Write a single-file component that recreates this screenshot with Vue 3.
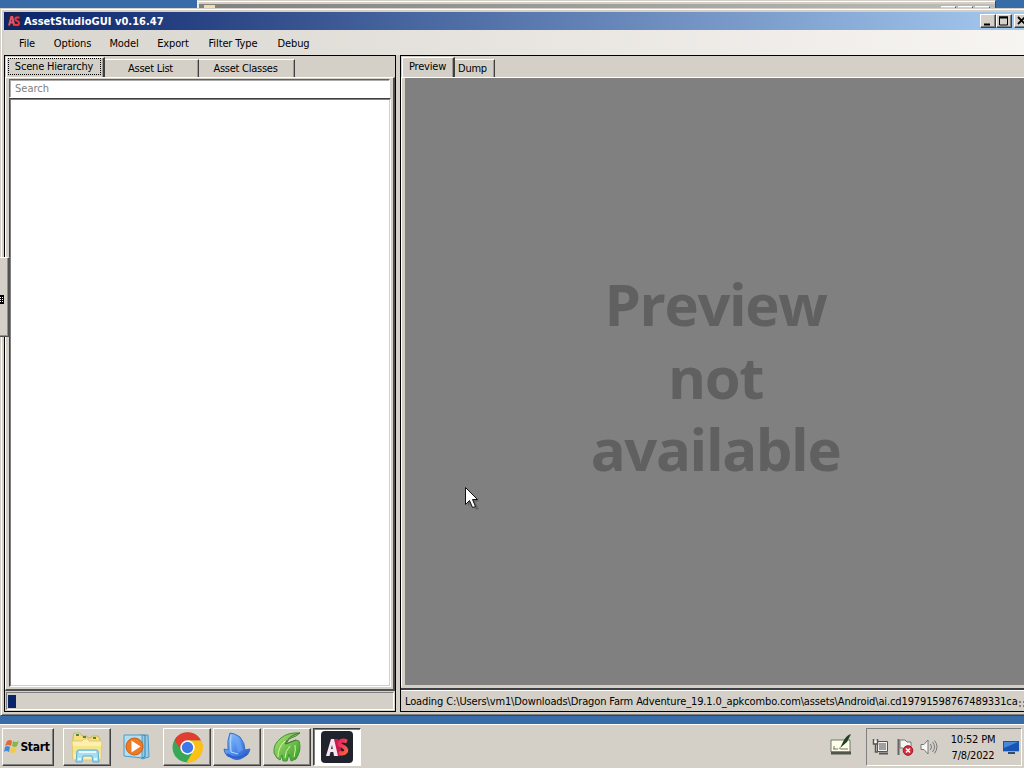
<script setup>
import { ref } from 'vue'

const menus = [
  { label: 'File', width: 36 },
  { label: 'Options', width: 55 },
  { label: 'Model', width: 48 },
  { label: 'Export', width: 50 },
  { label: 'Filter Type', width: 70 },
  { label: 'Debug', width: 51 }
]
const leftTabs = ['Scene Hierarchy', 'Asset List', 'Asset Classes']
const rightTabs = ['Preview', 'Dump']
const leftTab = ref(0)
const rightTab = ref(0)
const search = ref('')
</script>

<template>
  <div class="desktop">
    <!-- window behind -->
    <div class="back-window">
      <i class="folder"></i>
      <div class="back-buttons"><i></i><i></i><i></i></div>
    </div>

    <div class="window">
      <div class="titlebar">
        <svg class="logo" width="14" height="14" viewBox="0 0 14 14">
          <rect width="14" height="14" fill="#202445" />
          <path d="M2 11.500 4.300 3h1l1.900 8.500M3 8.500h3" stroke="#e0566c" stroke-width="2" fill="none" />
          <path d="M12.500 3.500H9.500q-2 1-.5 2.800l2.500 1.400q1.500 2.300-.8 3.300H7.500" stroke="#ed3348" stroke-width="2" fill="none" />
        </svg>
        <span class="title">AssetStudioGUI v0.16.47</span>
        <div class="window-buttons">
          <button><svg width="14" height="12"><path d="M3 9.5h6" stroke="#000" stroke-width="2" /></svg></button>
          <button><svg width="14" height="12"><path d="M2.5 2v8h8V2M2 2h9" fill="none" stroke="#000" /><path d="M2 2.5h9" stroke="#000" stroke-width="2" /></svg></button>
          <button class="close"><svg width="14" height="12"><path d="m3 2 7 7m0-7L3 9" stroke="#000" stroke-width="1.8" /></svg></button>
        </div>
      </div>

      <div class="menubar">
        <span v-for="m in menus" :key="m.label" :style="{ width: m.width + 'px' }">{{ m.label }}</span>
      </div>

      <div class="panels">
        <section class="panel left">
          <div class="tabs">
            <button
              v-for="(t, i) in leftTabs"
              :key="t"
              :class="{ active: leftTab === i }"
              @click="leftTab = i"
            ><span>{{ t }}</span></button>
          </div>
          <div class="tab-page">
            <input v-model="search" placeholder="Search">
            <div class="tree"></div>
          </div>
          <div class="progress"><i></i></div>
        </section>

        <section class="panel right">
          <div class="tabs">
            <button
              v-for="(t, i) in rightTabs"
              :key="t"
              :class="{ active: rightTab === i }"
              @click="rightTab = i"
            ><span>{{ t }}</span></button>
          </div>
          <div class="preview">
            <p>Preview</p>
            <p>not</p>
            <p>available</p>
          </div>
          <div class="status">
            <span>Loading C:\Users\vm1\Downloads\Dragon Farm Adventure_19.1.0_apkcombo.com\assets\Android\ai.cd19791598767489331ca</span>
            <i class="grip"></i>
          </div>
        </section>
      </div>
    </div>

    <div class="input-panel">
      <svg width="5" height="10"><path d="M0 0h4v9H0z" /><path d="M0 2.5h4M0 4.5h4M0 6.5h4" stroke="#fff" stroke-dasharray="1 1" /></svg>
    </div>

    <footer class="taskbar">
      <button class="start">
        <svg width="16" height="16" viewBox="0 0 16 16">
          <path d="M3 2q3-2 5 0L7 7Q4 5 1 7z" fill="#e6653c" />
          <path d="M9 2q3 2 6 0l-2 5q-2 2-5 0z" fill="#83b84b" />
          <path d="M1 8q3-2 5 0l-1 5q-3-2-5 0z" fill="#4389d5" />
          <path d="M7 8q3 2 6 0l-2 5q-2 2-5 0z" fill="#f4c943" />
        </svg>
        <span>Start</span>
      </button>
      <button class="task">
        <svg width="34" height="32" viewBox="0 0 34 32">
          <path d="M3 6 4 2h6l2 3h5l1 2h3l1-2h6l2 3v20H3z" fill="#f5df81" stroke="#cdb45e" />
          <path d="M2 10h10l2-2h4l1 2h13l-1 19H3z" fill="#ffefae" stroke="#dfc973" />
          <path d="M3 15h28v8H3z" fill="#f7e58e" />
          <path d="M6 4h3M13 6h3M23 7h3" stroke="#4b8a48" stroke-width="2" />
          <path d="M6 31 7 20q0-1 2-1h17q2 0 2 1l1 11h-6l-1-6H13l-1 6z" fill="#a6def5" stroke="#58acd4" />
          <path d="M9 21h17M8 28h3m13 0h3" stroke="#e4faff" stroke-width="2" />
        </svg>
      </button>
      <div class="task flat">
        <svg width="28" height="28" viewBox="0 0 28 28">
          <path d="m7 3 18-1 1 22-7 2z" fill="#9fcbe0" stroke="#4b9bc8" />
          <path d="m5 3 17-1v22l-4 1z" fill="#8ecbe8" stroke="#2f85bd" />
          <path d="M1 2h18v23l-18-2z" fill="#b2dff2" stroke="#4d9cc8" />
          <circle cx="11.500" cy="13.500" r="8.500" fill="#ed7b25" stroke="#ca5c16" />
          <path d="m8.500 7.500 9 6-9 6z" fill="#fff" />
        </svg>
      </div>
      <button class="task">
        <svg width="31" height="31" viewBox="0 0 30 30">
          <circle cx="15" cy="15" r="14.5" fill="#3aa757" />
          <path d="M15 15V8h13A14.5 14.5 0 0 1 14 29.5L21 18z" fill="#fbc116" />
          <path d="M2.4 7.8A14.5 14.5 0 0 1 28 8H15L9 18z" fill="#e23d31" />
          <circle cx="15" cy="15" r="7" fill="#fff" />
          <circle cx="15" cy="15" r="5.5" fill="#3f78e8" />
        </svg>
      </button>
      <button class="task">
        <svg width="30" height="30" viewBox="0 0 30 30">
          <defs><linearGradient id="fin" x2="1" y2="1"><stop stop-color="#9fd0ff" /><stop offset=".5" stop-color="#5190ef" /><stop offset="1" stop-color="#2450bf" /></linearGradient></defs>
          <path d="M6 18Q5 8 8 1q4 0 10 4 5 6 5 13l5-1q-1 6-6 8-7 5-14 0-5-1-6-8z" fill="url(#fin)" stroke="#3d6bc1" />
          <path d="M9 3q-1 7 0 17l7 2" stroke="#b2dcff" fill="none" />
          <path d="m12 3 4 18 5-3-4-12z" fill="#77adf6" opacity=".5" />
          <path d="M5 22q9 7 20 0" stroke="#2c61cf" stroke-width="2" fill="none" />
        </svg>
      </button>
      <button class="task">
        <svg width="30" height="32" viewBox="0 0 30 32">
          <defs><linearGradient id="leaf" x2="1" y2="1"><stop stop-color="#b4e77b" /><stop offset="1" stop-color="#329b21" /></linearGradient></defs>
          <path d="M28 2Q16 1 9 7 1 13 2 22l3 5 3 2 2-5 1 6h4l2-7 2 7 5-2q6-9 3-18l-3-1-10 4 3-5 7-3z" fill="url(#leaf)" stroke="#429334" />
          <path d="M6 26Q6 16 13 10M13 27q0-7 5-12m4 11q2-8 1-12" fill="none" stroke="#d5f5ac" />
          <path d="M28 2Q17 4 13 13l11-4" fill="none" stroke="#536b45" />
        </svg>
      </button>
      <button class="task pressed">
        <svg width="32" height="32" viewBox="0 0 32 32">
          <defs><linearGradient id="ess" x2="1" y2="1"><stop stop-color="#e52462" /><stop offset="1" stop-color="#ff653e" /></linearGradient></defs>
          <rect width="32" height="32" rx="4" fill="#20222c" />
          <path d="m11 8 6 0 5 17h-5z" fill="#c71a4a" />
          <path d="M26 10.500q-5-2-7 0-2 3 2 4.500 5 2 4 5.500-2 3-7 1" fill="none" stroke="url(#ess)" stroke-width="4" />
          <path d="m5 25 5-17h3l4 17h-4l-.7-4H9.500l-1 4zm5-7h1.800l-.8-4z" fill="#f3e6ee" />
        </svg>
      </button>

      <div class="spacer"></div>
      <svg class="tablet" width="22" height="22" viewBox="0 0 22 22">
        <path d="M1 6h19v12H1z" fill="#fffde8" stroke="#6f786b" />
        <path d="M1 19h20" stroke="#4f574b" stroke-width="3" />
        <path d="M3 15h5m1-1 2 1h7M4 12v3" stroke="#69796b" fill="none" />
        <path d="M21 0q-4 1-7 6l-4 8 7-6q2-4 4-8z" fill="#213e29" />
      </svg>
      <div class="tray">
        <svg width="18" height="18" viewBox="0 0 18 18">
          <path d="M5.5 3.5h10v10h-10z" fill="#eee" stroke="#555" />
          <path d="M7 5h7v7H7z" fill="#a0a19e" />
          <path d="M7 15.500h9" stroke="#555" stroke-width="2" />
          <path d="M1.500 1v5h4V1M3.500 6v8H6" fill="none" stroke="#555" stroke-width="1.5" />
          <path d="M2.500 2.500h2V5h-2z" fill="#fff" />
        </svg>
        <svg width="18" height="18" viewBox="0 0 18 18">
          <path d="M2.500 1v16" stroke="#666" stroke-width="2" />
          <path d="M4 2h5l2 2h4v8H9l-2-2H4z" fill="#f5f5f1" stroke="#777" />
          <circle cx="12" cy="12.500" r="4.800" fill="#d42c38" stroke="#a51825" />
          <path d="m10 10.500 4 4m0-4-4 4" stroke="#fff" stroke-width="1.700" />
        </svg>
        <svg width="18" height="18" viewBox="0 0 18 18">
          <path d="M1 6.500h3l4-4.500v14l-4-4.500H1z" fill="#f7f7f4" stroke="#777" />
          <path d="M10.500 6q2 3 0 6M12.500 4q4 5 0 10M14.500 2.500q5 6 0 13" fill="none" stroke="#777" />
        </svg>
        <div class="clock"><span>10:52 PM</span><span>7/8/2022</span></div>
        <svg class="monitor" width="16" height="14" viewBox="0 0 16 14">
          <path d="M0 1h16v10H0z" fill="#1754b4" /><path d="M1 2h14L1 8z" fill="#4589dc" />
          <path d="M0 11.500h16" stroke="#8cabc4" /><path d="M5 13h7" stroke="#304d69" stroke-width="2" />
        </svg>
      </div>
    </footer>

    <svg class="cursor" width="18" height="26" viewBox="0 0 18 26">
      <path d="m3 3 11 11-4 1 4 7-3 1-4-7-4 3z" fill="#333" opacity=".35" />
      <path d="M.5.5v17l4-4 3 7 3-1-3-7h5z" fill="#fff" stroke="#111" />
    </svg>
  </div>
</template>

<style>
body {
  margin: 0;
  overflow: hidden;
}
</style>

<style scoped>
* {
  box-sizing: border-box;
}

.desktop {
  position: relative;
  display: flex;
  flex-direction: column;
  width: 1024px;
  height: 768px;
  overflow: hidden;
  background: #386ca8;
  color: #000;
  font: 11px/14px "DejaVu Sans Condensed", "DejaVu Sans", sans-serif;
  font-stretch: condensed;
}

svg {
  display: block;
  flex-shrink: 0;
}

button {
  padding: 0;
  border: 0;
  border-radius: 0;
  background: #d4d0c8;
  color: inherit;
  font: inherit;
}

.back-window {
  display: flex;
  justify-content: space-between;
  width: 799px;
  height: 8px;
  margin-left: 197px;
  padding: 3px 5px 0;
  border-top: 1px solid #d4d0c8;
  border-left: 2px solid #eeece5;
  border-right: 1px solid #454545;
  background: linear-gradient(#fff 1px, #d4d0c8 1px 3px, transparent 3px), linear-gradient(90deg, #808080, #bebdb7);
}

.folder {
  width: 11px;
  height: 4px;
  margin-top: 1px;
  background: #efdfa7;
}

.back-buttons {
  display: flex;
  gap: 2px;
}

.back-buttons i {
  width: 15px;
  height: 3px;
  margin-top: 2px;
  border-top: 1px solid #fff;
  border-right: 1px solid #555;
  background: #d4d0c8;
}

/* main window, wider than the screen */
.window {
  display: flex;
  flex-direction: column;
  width: 1032px;
  height: 708px;
  padding: 2px 0 0 2px;
  border-top: 1px solid #d4d0c8;
  border-left: 1px solid #d4d0c8;
  border-bottom: 1px solid #404040;
  background: #d4d0c8;
  box-shadow: inset 1px 1px #fff, inset 0 -1px #808080;
}

.titlebar {
  display: flex;
  align-items: center;
  width: 1028px;
  height: 18px;
  margin: 1px 0 0 1px;
  padding-left: 3px;
  background: linear-gradient(90deg, #0a246a, #a6caf0);
}

.title {
  width: 142px;
  margin-left: 3px;
  padding-top: 1px;
  color: #fff;
  font-weight: bold;
  letter-spacing: 0.04px;
  white-space: nowrap;
}

.window-buttons {
  display: flex;
  margin-left: auto;
}

.window-buttons button {
  width: 16px;
  height: 14px;
  border: 1px solid;
  border-color: #fff #404040 #404040 #fff;
  box-shadow: inset -1px -1px #808080;
  overflow: hidden;
}

.window-buttons .close {
  margin: 0 2px;
}

.menubar {
  display: flex;
  align-items: center;
  height: 25px;
  margin-left: 1px;
  padding: 3px 0 0 5px;
  background: linear-gradient(90deg, #d8d5ce, #f7f5f2);
}

.menubar span {
  text-align: center;
  letter-spacing: -0.12px;
  white-space: nowrap;
}

.panels {
  display: flex;
  gap: 4px;
  height: 657px;
  margin-left: 1px;
}

.panel {
  display: flex;
  flex-direction: column;
  border: 1px solid #000;
}

.left {
  width: 392px;
}

.right {
  width: 632px;
}

.tabs {
  display: flex;
  align-items: flex-end;
  height: 21px;
  padding-left: 1px;
  flex-shrink: 0;
}

.tabs button {
  height: 18px;
  border-top: 1px solid #fff;
  border-right: 1px solid #404040;
  box-shadow: inset -1px 0 #a09d97;
  letter-spacing: -0.25px;
  white-space: nowrap;
}

.tabs .active {
  height: 20px;
  padding: 0 2px 2px;
  border-left: 1px solid #fff;
  border-right-width: 2px;
}

.left .tabs button {
  width: 95px;
  padding-right: 2px;
}

.left .tabs .active {
  width: 99px;
  padding: 0 2px 2px 1px;
  letter-spacing: -0.18px;
}

.left .tabs button:nth-child(2) {
  width: 94px;
}

.left .tabs button:nth-child(3) {
  width: 96px;
}

.left .active span {
  display: block;
  height: 17px;
  padding-right: 1px;
  border: 1px dotted #000;
  line-height: 15px;
}

.right .tabs .active {
  width: 53px;
  padding: 0 3px 2px 2px;
  letter-spacing: -0.2px;
}

.right .tabs button {
  width: 40px;
  padding-right: 4px;
}

.tab-page {
  display: flex;
  flex-direction: column;
  height: 614px;
  padding: 1px 3px 2px;
  border-top: 1px solid #fff;
  border-left: 1px solid #fff;
  border-right: 2px solid #505050;
  border-bottom: 2px solid #505050;
}

input {
  width: 381px;
  height: 19px;
  padding: 0 5px;
  border: 1px solid;
  border-color: #606060 #fff #fff #606060;
  border-radius: 0;
  outline: 0;
  box-shadow: inset 1px 1px #aaa;
  background: #fff;
  font: inherit;
}

input::placeholder {
  color: #808080;
}

.tree {
  flex: 1;
  width: 382px;
  border: 1px solid;
  border-color: #404040 #fff #fff #404040;
  box-shadow: inset 1px 1px #808080, inset -1px -1px #d4d0c8;
  background: #fff;
}

.progress {
  height: 18px;
  margin: 1px 1px 0;
  padding: 2px 1px;
  border: 1px solid;
  border-color: #808080 #fff #fff #808080;
}

.progress i {
  display: block;
  width: 8px;
  height: 13px;
  background: #0a246a;
}

.preview {
  display: flex;
  flex-direction: column;
  align-items: center;
  height: 611px;
  padding: 190px 2px 0 0;
  border-top: 1px solid #fff;
  border-left: 1px solid #fff;
  border-bottom: 3px solid #d4d0c8;
  background: #808080;
  box-shadow: inset 3px 0 #d4d0c8;
  color: #606060;
  font: bold 58px/72.5px "Open Sans", sans-serif;
  letter-spacing: -1.4px;
}

.preview p {
  margin: 0;
}

.status {
  display: flex;
  align-items: center;
  height: 23px;
  padding: 2px 0 0 4px;
  border-top: 2px solid #404040;
  box-shadow: inset 0 1px #fff;
  white-space: nowrap;
}

.status span {
  width: 614px;
  letter-spacing: -0.125px;
}

.grip {
  width: 8px;
  height: 8px;
  margin-top: 6px;
  background: radial-gradient(circle at 1px 1px, #808080 1px, transparent 1px) 0 0 / 4px 4px;
}

.input-panel {
  position: absolute;
  top: 257px;
  left: 0;
  width: 10px;
  height: 80px;
  padding-top: 37px;
  border: solid #505050;
  border-width: 1px 2px 1px 0;
  border-top-color: #fff;
  background: #d4d0c8;
  box-shadow: inset -1px -1px #909090;
}

.taskbar {
  display: flex;
  height: 44px;
  margin-top: 8px;
  padding-top: 3px;
  border-top: 1px solid #fff;
  background: #d4d0c8;
}

.start,
.task {
  display: flex;
  align-items: center;
  justify-content: center;
  height: 38px;
  border: 1px solid;
  border-color: #fff #404040 #404040 #fff;
  box-shadow: inset -1px -1px #808080;
}

.start {
  width: 52px;
  margin: 0 9px 0 2px;
  padding-right: 2px;
  font-size: 12px;
  font-weight: bold;
  letter-spacing: -0.3px;
}

.task {
  width: 48px;
  margin-right: 2px;
}

.flat {
  border-color: transparent;
  box-shadow: none;
}

.pressed {
  border-color: #404040 #fff #fff #404040;
  background: #fff;
  box-shadow: inset 1px 1px #808080;
}

.spacer {
  flex: 1;
}

.tablet {
  margin: 6px 14px 0 0;
}

.tray {
  display: flex;
  align-items: center;
  gap: 6px;
  width: 156px;
  height: 38px;
  margin-right: 2px;
  padding-left: 5px;
  border: 1px solid;
  border-color: #808080 #fff #fff #808080;
}

.clock {
  display: flex;
  flex-direction: column;
  align-items: center;
  width: 46px;
  margin: 2px 1px 0 6px;
  line-height: 16px;
  letter-spacing: -0.2px;
  white-space: nowrap;
}

.monitor {
  width: 16px;
}

.cursor {
  position: absolute;
  top: 487px;
  left: 465px;
}
</style>
